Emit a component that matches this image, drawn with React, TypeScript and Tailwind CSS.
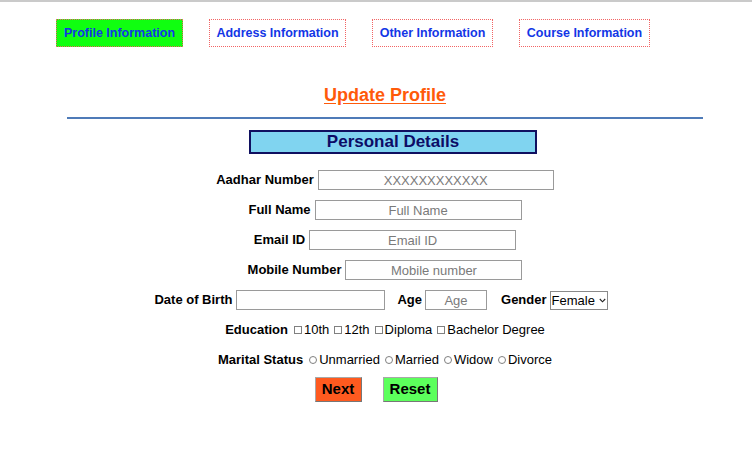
import React from "react";

const tabs = [
  { id: "profile", label: "Profile Information", width: "w-[127px]", active: true },
  { id: "address", label: "Address Information", width: "w-[137px]", active: false },
  { id: "other", label: "Other Information", width: "w-[121px]", active: false },
  { id: "course", label: "Course Information", width: "w-[131px]", active: false },
];

function Field({
  label,
  placeholder,
  width,
}: {
  label: string;
  placeholder: string;
  width: string;
}) {
  return (
    <div className="flex h-[20px] items-center justify-center">
      <span className="mr-[4px] text-[13px] font-bold text-black">{label}</span>
      <input
        type="text"
        placeholder={placeholder}
        className={`${width} h-[20px] border border-[#9a9a9a] bg-white text-center text-[13px] text-[#333] placeholder:text-[#7a7a7a] outline-none`}
      />
    </div>
  );
}

function Box() {
  return <span className="mr-[2px] inline-block h-[8px] w-[8px] border border-[#808080] bg-white" />;
}

function Dot() {
  return <span className="mr-[2px] inline-block h-[8px] w-[8px] rounded-full border border-[#808080] bg-white" />;
}

export default function App() {
  return (
    <div className="min-h-[451px] bg-white font-['Liberation_Sans',Arial,sans-serif] text-black">
      <div className="h-[2px] bg-[#cacaca]" />

      {/* tabs */}
      <div className="mt-[17px] ml-[56px] flex gap-[26px]">
        {tabs.map((tab) => (
          <div
            key={tab.id}
            className={`${tab.width} flex h-[28px] items-center justify-center border border-dotted border-[#f26464] text-[12.5px] font-bold text-[#1336e6] ${
              tab.active ? "bg-[#10ff10]" : "bg-white"
            }`}
          >
            {tab.label}
          </div>
        ))}
      </div>

      <div className="pl-[18px]">
        <h1 className="mt-[37px] text-center text-[18px] leading-[22px] font-bold text-[#ff5a0a] underline underline-offset-[2px]">
          Update Profile
        </h1>

        <div className="mx-[49px] mt-[11px] h-[2px] bg-[#4f7bb8]" />

        <div className="mt-[11px] flex justify-center">
          <div className="ml-[16px] flex h-[24px] w-[288px] items-center justify-center border-2 border-[#101060] bg-[#80d4f0] text-[17px] font-bold text-[#0c0c66]">
            Personal Details
          </div>
        </div>

        <div className="mt-[16px] flex flex-col gap-[10px]">
          <Field label="Aadhar Number" placeholder="XXXXXXXXXXXX" width="w-[236px]" />
          <Field label="Full Name" placeholder="Full Name" width="w-[207px]" />
          <Field label="Email ID" placeholder="Email ID" width="w-[207px]" />
          <Field label="Mobile Number" placeholder="Mobile number" width="w-[177px]" />

          <div className="-ml-[8px] flex h-[20px] items-center justify-center text-[13px]">
            <span className="mr-[4px] font-bold">Date of Birth</span>
            <input type="text" className="h-[20px] w-[149px] border border-[#9a9a9a] bg-white outline-none" />
            <span className="mr-[3px] ml-[12px] font-bold">Age</span>
            <input
              type="text"
              placeholder="Age"
              className="h-[20px] w-[62px] border border-[#9a9a9a] bg-white text-center placeholder:text-[#7a7a7a] outline-none"
            />
            <span className="mr-[3px] ml-[14px] font-bold">Gender</span>
            <div className="flex h-[19px] w-[58px] items-center border border-[#8a8a8a] bg-white pl-[1px]">
              <select className="appearance-none bg-transparent text-[13px] leading-[17px] outline-none">
                <option>Female</option>
                <option>Male</option>
              </select>
              <svg width="7" height="5" viewBox="0 0 7 5" className="ml-[3px]">
                <path d="M0.8 1 L3.5 3.8 L6.2 1" fill="none" stroke="#222" strokeWidth="1.1" />
              </svg>
            </div>
          </div>

          <div className="flex h-[20px] items-center justify-center text-[13px]">
            <span className="mr-[6px] font-bold">Education</span>
            <label className="mr-[5px] flex items-center"><Box />10th</label>
            <label className="mr-[5px] flex items-center"><Box />12th</label>
            <label className="mr-[5px] flex items-center"><Box />Diploma</label>
            <label className="flex items-center"><Box />Bachelor Degree</label>
          </div>

          <div className="flex h-[20px] items-center justify-center text-[13px]">
            <span className="mr-[6px] font-bold">Marital Status</span>
            <label className="mr-[5px] flex items-center"><Dot />Unmarried</label>
            <label className="mr-[5px] flex items-center"><Dot />Married</label>
            <label className="mr-[5px] flex items-center"><Dot />Widow</label>
            <label className="flex items-center"><Dot />Divorce</label>
          </div>
        </div>
      </div>

      <div className="mt-[7px] flex justify-center gap-[21px]">
        <button className="h-[25px] w-[47px] border border-[#a8a8a8] border-b-[#777] border-r-[#777] bg-[#ff5a1f] text-[15px] font-bold text-black">
          Next
        </button>
        <button className="h-[25px] w-[55px] border border-[#a8a8a8] border-b-[#777] border-r-[#777] bg-[#5cff5c] text-[15px] font-bold text-black">
          Reset
        </button>
      </div>
    </div>
  );
}
